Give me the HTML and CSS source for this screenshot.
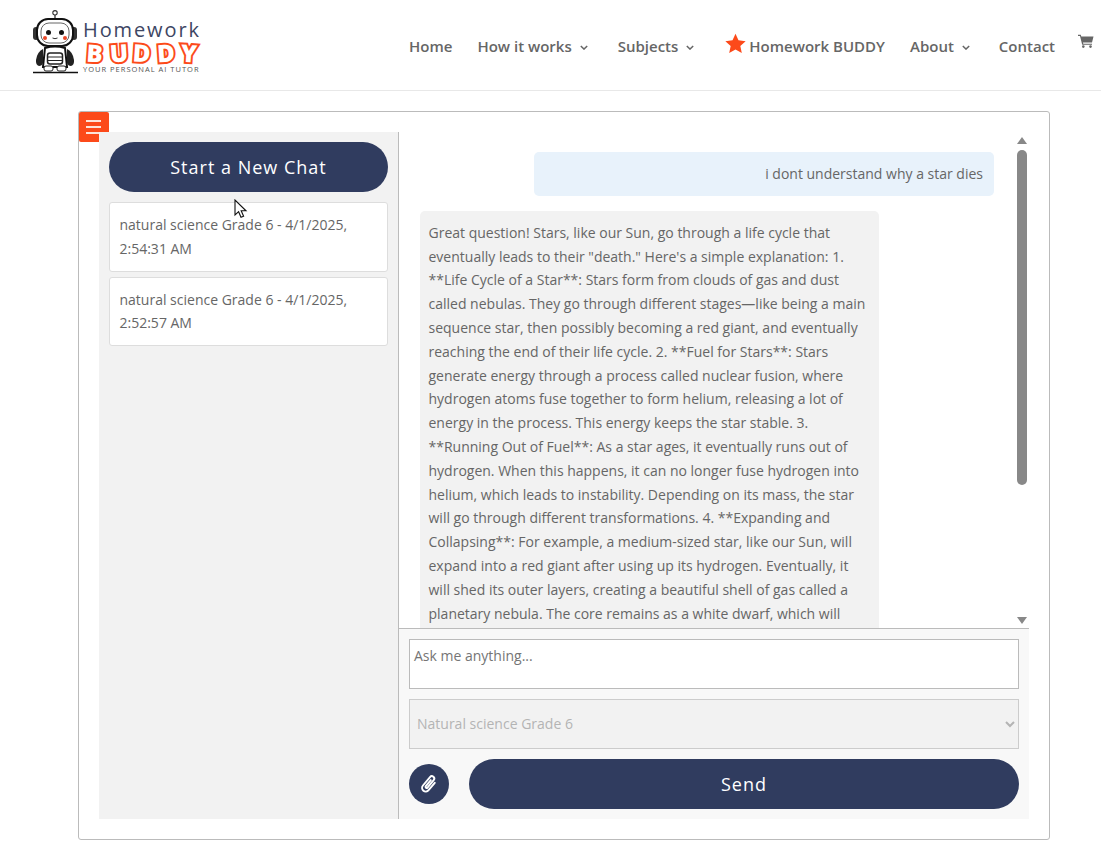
FILE: index.html
```html
<!DOCTYPE html>
<html lang="en">
<head>
    <meta charset="UTF-8">
    <meta name="viewport" content="width=device-width, initial-scale=1.0">
    <title>Homework Buddy</title>
    <link rel="stylesheet" href="styles.css">
</head>
<body>

<header class="site-header">
    <a class="logo" href="#">
        <svg class="logo-robot" viewBox="0 0 45 64" width="45" height="64">
            <circle cx="22" cy="2.800" r="2.200" fill="#fff" stroke="#333" stroke-width="1.100"/>
            <path d="M22 5v4" stroke="#333" stroke-width="1.300"/>
            <rect x="0" y="17" width="6" height="13" rx="3" fill="#333"/>
            <rect x="38" y="17" width="6" height="13" rx="3" fill="#333"/>
            <rect x="4" y="9" width="36" height="27" rx="11" fill="#fff" stroke="#111" stroke-width="2"/>
            <rect x="8" y="13" width="28" height="20" rx="8" fill="#fff" stroke="#666" stroke-width="1"/>
            <circle cx="15.500" cy="22.500" r="2.500" fill="#111"/>
            <circle cx="28.500" cy="22.500" r="2.500" fill="#111"/>
            <circle cx="12" cy="28" r="2" fill="#e8492a"/>
            <circle cx="32" cy="28" r="2" fill="#e8492a"/>
            <path d="M19.500 28q2.500 1.400 5 0" fill="none" stroke="#333" stroke-width="1"/>
            <path d="M12 38q10-3 20 0l2 19H10z" fill="#fff" stroke="#111" stroke-width="2"/>
            <rect x="14.500" y="43" width="15" height="11" rx="2.500" fill="#fff" stroke="#222" stroke-width="1.500"/>
            <path d="M14.500 47h15M14.500 50.500h15" stroke="#222" stroke-width="1"/>
            <path d="M10 39q-6 3-7 11-.5 5 3 6 3 0 4-3z" fill="#222"/>
            <path d="M34 39q6 3 7 11 .5 5-3 6-3 0-4-3z" fill="#222"/>
            <rect x="11" y="56" width="9" height="5" rx="2" fill="#fff" stroke="#222"/>
            <rect x="24" y="56" width="9" height="5" rx="2" fill="#fff" stroke="#222"/>
            <path d="M0 62.500h45" stroke="#111" stroke-width="1.600"/>
        </svg>
        <span class="logo-text">
            <span class="logo-home">Homework</span>
            <span class="logo-buddy"><b>B</b><b>U</b><b>D</b><b>D</b><b>Y</b></span>
            <span class="logo-tag">YOUR PERSONAL AI TUTOR</span>
        </span>
    </a>

    <nav class="main-nav">
        <a href="#" class="nav-home">Home</a>
        <a href="#" class="has-sub">How it works <svg class="chev" viewBox="0 0 10 6" width="8" height="5"><path d="M1 1l4 4 4-4" fill="none" stroke="#666" stroke-width="1.800"/></svg></a>
        <a href="#" class="has-sub">Subjects <svg class="chev" viewBox="0 0 10 6" width="8" height="5"><path d="M1 1l4 4 4-4" fill="none" stroke="#666" stroke-width="1.800"/></svg></a>
        <a href="#" class="nav-star">
            <svg viewBox="0 0 24 24" width="21" height="21"><path d="M12 .8l3.400 7.600 8.200.9-6.100 5.500 1.700 8.100L12 18.800l-7.200 4.100 1.700-8.100L.4 9.300l8.200-.9z" fill="#fc4a1a"/></svg>
            Homework BUDDY
        </a>
        <a href="#" class="has-sub nav-about">About <svg class="chev" viewBox="0 0 10 6" width="8" height="5"><path d="M1 1l4 4 4-4" fill="none" stroke="#666" stroke-width="1.800"/></svg></a>
        <a href="#">Contact</a>
    </nav>

    <svg class="cart" viewBox="0 0 16 14" width="16" height="14">
        <path d="M0 .8h2.800l.5 1.700H15.500l-1.500 6H5l.3 1.200h8.700v1.100H4.200L2 1.900H0z" fill="#666"/>
        <circle cx="5.300" cy="12.600" r="1.300" fill="#666"/>
        <circle cx="12.500" cy="12.600" r="1.300" fill="#666"/>
    </svg>
</header>

<main class="chat-box">
    <button class="menu-toggle" aria-label="Menu"><span></span><span></span><span></span></button>

    <aside class="sidebar">
        <button class="pill-btn">Start a New Chat</button>
        <div class="history-item">natural science Grade 6 - 4/1/2025, 2:54:31 AM</div>
        <div class="history-item">natural science Grade 6 - 4/1/2025, 2:52:57 AM</div>
        <svg class="cursor" viewBox="0 0 14 20" width="14" height="20">
            <path d="M1 1v15l3.600-3.300 2.400 5.600 2.600-1.100-2.400-5.400H12z" fill="#fff" stroke="#111" stroke-width="1.100"/>
        </svg>
    </aside>

    <section class="chat-main">
        <div class="messages-wrap">
            <div class="messages">
                <div class="msg msg-user">i dont understand why a star dies</div>
                <div class="msg msg-bot">Great question! Stars, like our Sun, go through a life cycle that eventually leads to their "death." Here's a simple explanation: 1. **Life Cycle of a Star**: Stars form from clouds of gas and dust called nebulas. They go through different stages—like being a main sequence star, then possibly becoming a red giant, and eventually reaching the end of their life cycle. 2. **Fuel for Stars**: Stars generate energy through a process called nuclear fusion, where hydrogen atoms fuse together to form helium, releasing a lot of energy in the process. This energy keeps the star stable. 3. **Running Out of Fuel**: As a star ages, it eventually runs out of hydrogen. When this happens, it can no longer fuse hydrogen into helium, which leads to instability. Depending on its mass, the star will go through different transformations. 4. **Expanding and Collapsing**: For example, a medium-sized star, like our Sun, will expand into a red giant after using up its hydrogen. Eventually, it will shed its outer layers, creating a beautiful shell of gas called a planetary nebula. The core remains as a white dwarf, which will</div>
            </div>
            <div class="scrollbar">
                <span class="arrow arrow-up"></span>
                <div class="scroll-track"><div class="scroll-thumb"></div></div>
                <span class="arrow arrow-down"></span>
            </div>
        </div>

        <form class="composer">
            <textarea class="ask-input" placeholder="Ask me anything..."></textarea>
            <select class="subject-select" disabled>
                <option>Natural science Grade 6</option>
            </select>
            <div class="composer-actions">
                <button type="button" class="attach-btn" aria-label="Attach">
                    <svg viewBox="0 0 24 24" width="22" height="22"><path transform="rotate(40 12 12)" d="M16 7v10.500a4 4 0 0 1-8 0V5.500a2.600 2.600 0 0 1 5.200 0V16a1.200 1.200 0 0 1-2.400 0V7.500" fill="none" stroke="#fff" stroke-width="2.100" stroke-linecap="round"/></svg>
                </button>
                <button type="button" class="pill-btn send-btn">Send</button>
            </div>
        </form>
    </section>
</main>

</body>
</html>
```

FILE: styles.css
```css
/* Page */
body {
    font-family: 'Open Sans', sans-serif;
    margin: 0;
    background: #fff;
    color: #666;
    height: 853px;
    overflow: hidden;
}

a {
    color: inherit;
    text-decoration: none;
}

/* Header */
.site-header {
    display: flex;
    align-items: flex-start;
    height: 90px;
    border-bottom: 1px solid #e8e8e8;
}

.logo {
    display: flex;
    align-items: flex-start;
    gap: 5px;
    margin: 10px 0 0 33px;
}

.logo-text {
    display: flex;
    flex-direction: column;
    width: 118px;
    padding-top: 9px;
}

.logo-home {
    font-size: 20px;
    line-height: 22px;
    letter-spacing: 1.900px;
    color: #3d4663;
    white-space: nowrap;
}

.logo-buddy {
    display: flex;
    height: 21px;
    margin-top: 1px;
}

.logo-buddy b {
    width: 23.600px;
    height: 21px;
    color: #fff;
    font-size: 24px;
    line-height: 21px;
    font-weight: 800;
    text-align: center;
    -webkit-text-stroke: 4px #fc4a1a;
    paint-order: stroke fill;
}

.logo-buddy b:nth-child(odd) {
    transform: rotate(4deg);
}

.logo-buddy b:nth-child(even) {
    transform: rotate(-4deg);
}

.logo-tag {
    margin-top: 2px;
    font-size: 7.500px;
    line-height: 9px;
    letter-spacing: 1px;
    color: #555;
    white-space: nowrap;
}

.main-nav {
    display: flex;
    align-items: center;
    height: 20px;
    margin: 36px 0 0 208px;
    font-size: 15px;
    font-weight: 600;
    line-height: 20px;
    white-space: nowrap;
}

.main-nav a {
    display: flex;
    align-items: center;
    margin-right: 26px;
}

.main-nav .chev {
    margin: 2px 0 0 8px;
}

.main-nav .nav-home {
    margin-right: 25px;
}

.main-nav .has-sub {
    margin-right: 30px;
}

.main-nav .nav-about {
    margin-right: 29px;
}

.main-nav .nav-star {
    gap: 3px;
    margin-left: 1px;
    margin-right: 25px;
}

.nav-star svg {
    margin-top: -6px;
}

.cart {
    margin: 34px 0 0 -3px;
}

/* Chat box */
.chat-box {
    display: flex;
    position: relative;
    box-sizing: border-box;
    width: 972px;
    height: 729px;
    margin: 20px 0 0 78px;
    padding: 20px;
    border: 1px solid #bbb;
    border-radius: 3px;
}

.menu-toggle {
    position: absolute;
    left: 0;
    top: 0;
    display: flex;
    flex-direction: column;
    justify-content: center;
    gap: 4px;
    width: 30px;
    height: 30px;
    padding: 0 8px 0 7px;
    background: #fc4a1a;
    border: none;
    border-radius: 2px;
}

.menu-toggle span {
    display: block;
    height: 2px;
    background: #fde3d8;
}

.sidebar {
    position: relative;
    box-sizing: border-box;
    width: 300px;
    padding: 10px;
    background: #f2f2f2;
    border-right: 1px solid #bbb;
    flex-shrink: 0;
}

.pill-btn {
    display: block;
    width: 100%;
    height: 50px;
    background: #303c5f;
    color: #fff;
    border: none;
    border-radius: 25px;
    font-family: inherit;
    font-size: 18px;
    font-weight: 500;
    letter-spacing: 1px;
    margin-bottom: 10px;
}

.history-item {
    box-sizing: border-box;
    background: #fff;
    border: 1px solid #ddd;
    border-radius: 3px;
    padding: 10px 9.500px;
    margin-bottom: 5px;
    font-size: 14px;
    line-height: 23.800px;
}

.cursor {
    position: absolute;
    left: 135px;
    top: 67px;
}

.chat-main {
    display: flex;
    flex-direction: column;
    flex: 1;
    min-width: 0;
}

.messages-wrap {
    display: flex;
    height: 496px;
    border-bottom: 1px solid #bbb;
    flex-shrink: 0;
}

.messages {
    flex: 1;
    min-width: 0;
    overflow: hidden;
    padding: 20px 23px 0 21px;
}

.msg {
    box-sizing: border-box;
    padding: 10px 9px;
    border-radius: 5px;
    font-size: 14px;
    line-height: 23.800px;
    margin-bottom: 15px;
}

.msg-user {
    width: 460px;
    margin-left: auto;
    padding-right: 11px;
    background: #e8f2fb;
    text-align: right;
}

.msg-bot {
    width: 459px;
    padding-left: 8.500px;
    background: #f2f2f2;
}

.scrollbar {
    display: flex;
    flex-direction: column;
    align-items: center;
    width: 10px;
    margin-right: 2px;
    padding-top: 5px;
}

.arrow {
    width: 0;
    height: 0;
    border-left: 5px solid transparent;
    border-right: 5px solid transparent;
}

.arrow-up {
    border-bottom: 7px solid #888;
}

.arrow-down {
    border-top: 7px solid #888;
    margin-bottom: 4px;
}

.scroll-track {
    flex: 1;
    width: 10px;
    padding-top: 6px;
}

.scroll-thumb {
    height: 335px;
    background: #888;
    border-radius: 5px;
}

.composer {
    flex: 1;
    display: flex;
    flex-direction: column;
    gap: 10px;
    padding: 10px;
    background: #f8f8f8;
}

.ask-input {
    box-sizing: border-box;
    height: 50px;
    width: 100%;
    padding: 6px 4px 4px;
    border: 1px solid #bbb;
    background: #fff;
    font-family: inherit;
    font-size: 14px;
    line-height: 20px;
    resize: none;
    outline: none;
}

.ask-input::placeholder {
    color: #757575;
}

.subject-select {
    box-sizing: border-box;
    height: 50px;
    width: 100%;
    padding: 0 3px 2px;
    border: 1px solid #ccc;
    background: #f2f2f2;
    color: #b4b4b4;
    font-family: inherit;
    font-size: 14px;
    opacity: 1;
}

.composer-actions {
    display: flex;
    align-items: center;
    gap: 20px;
}

.attach-btn {
    display: flex;
    align-items: center;
    justify-content: center;
    width: 40px;
    height: 40px;
    padding: 0;
    background: #303c5f;
    border: none;
    border-radius: 50%;
    flex-shrink: 0;
}

.send-btn {
    flex: 1;
    width: auto;
    margin: 0;
}
```
